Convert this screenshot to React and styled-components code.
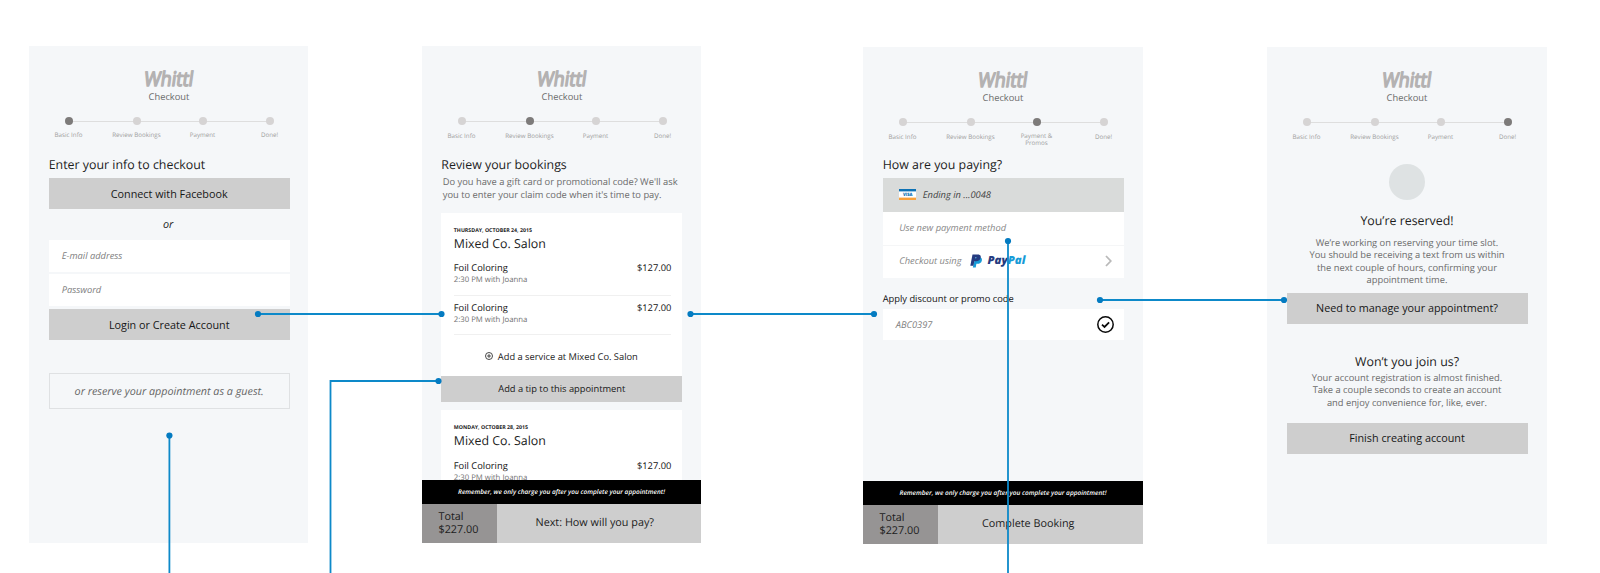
import React from "react";
import styled, { createGlobalStyle } from "styled-components";

const GlobalStyle = createGlobalStyle`
  * { box-sizing: border-box; }
  body {
    margin: 0;
    background: #fff;
    color: #1c1c1c;
    font-family: "Open Sans", "Noto Sans", sans-serif;
    font-size: 9.32px;
    text-rendering: geometricPrecision;
    overflow: hidden;
  }
`;

const Board = styled.main`
  position: relative;
  display: flex;
  align-items: flex-start;
  width: 1600px;
  height: 573px;
  padding: 46px 0 0 29px;
`;

const Screen = styled.section`
  display: flex;
  flex-direction: column;
  flex: none;
  width: ${(p) => p.$width || 279}px;
  height: 497px;
  margin: ${(p) => p.$top || 0}px ${(p) => p.$gap || 0}px 0 0;
  background: #f5f7f9;
  overflow: hidden;
`;

/* ---------- header ---------- */

const Header = styled.header`
  flex: none;
  width: 279px;
  height: ${(p) => p.$height || 110}px;
  padding-top: 23px;
`;

const Logo = styled.svg`
  display: block;
  width: 56px;
  height: 20px;
  margin: 0 auto;
  overflow: visible;

  text {
    font: 400 20px "Open Sans", sans-serif;
    fill: #b4b2b2;
    stroke: #b4b2b2;
    stroke-width: 1.5;
    stroke-linejoin: round;
  }
`;

const Subtitle = styled.div`
  padding-left: 1px;
  line-height: 16px;
  text-align: center;
  color: #6a6a6a;
`;

const Stepper = styled.ol`
  display: grid;
  grid-template-columns: 67px 69px 63px 71px;
  margin: 12px 0 0;
  padding: 0 0 0 6px;
  list-style: none;
  background: linear-gradient(#dedede, #dedede) 39px 3.5px / 201px 1px no-repeat;
`;

const StepItem = styled.li`
  display: flex;
  flex-direction: column;
  align-items: center;
  gap: ${(p) => p.$gap}px;
  color: #a0a0a0;
  font-size: 6.22px;
  line-height: 7px;
  text-align: center;
  white-space: pre-line;

  &::before {
    content: "";
    width: 8px;
    height: 8px;
    border-radius: 50%;
    background: ${(p) => (p.$active ? "#7d7b7a" : "#d6d4d4")};
  }
`;

/* ---------- shared parts ---------- */

const Content = styled.div`
  display: flex;
  flex-direction: column;
  flex: 1;
  width: 279px;
  min-height: 0;
  padding: 0 18px 0 20px;
  margin-left: ${(p) => p.$shift || 0}px;
  overflow: hidden;
`;

const Title = styled.h2`
  flex: none;
  margin: ${(p) => p.$top || 0}px 0 0;
  font-size: 12.38px;
  font-weight: 400;
  line-height: 18px;
  text-align: ${(p) => p.$align || "left"};
`;

const Button = styled.button`
  flex: none;
  height: ${(p) => p.$height || 31}px;
  margin: ${(p) => p.$top || 0}px 0 0;
  padding: 0 0 ${(p) => p.$lift || 0}px;
  border: 0;
  background: #cecece;
  color: #161616;
  font-family: inherit;
  font-size: ${(p) => (p.$small ? 9.32 : 10.8)}px;
`;

const Or = styled.div`
  height: 31px;
  padding-right: 2px;
  line-height: 31px;
  font-size: 10.8px;
  font-style: italic;
  text-align: center;
`;

const Field = styled.div`
  display: flex;
  align-items: center;
  justify-content: space-between;
  height: 31.5px;
  margin-bottom: ${(p) => p.$gap || 0}px;
  padding: 0 9.5px 0 13px;
  background: #fff;
  color: #808080;
  font-style: italic;
`;

const GuestBox = styled.div`
  width: 241px;
  height: 36px;
  margin: 33px 0 0;
  border: 1px solid #dfe1e3;
  color: #666;
  font-size: 10.78px;
  font-style: italic;
  line-height: 35px;
  text-align: center;
`;

const Copy = styled.p`
  flex: none;
  margin: ${(p) => p.$top || 0}px 0 0;
  padding-left: ${(p) => p.$indent || 0}px;
  color: #6a6a6a;
  line-height: ${(p) => p.$line || 12.3}px;
  text-align: ${(p) => p.$align || "center"};
  white-space: pre;
`;

/* ---------- bookings ---------- */

const Card = styled.article`
  flex: none;
  height: ${(p) => p.$height}px;
  margin-top: ${(p) => p.$top}px;
  padding: 14px 11px 0 12.5px;
  background: #fff;
`;

const CardDate = styled.div`
  font-size: 5.28px;
  font-weight: 700;
  line-height: 7px;
`;

const Salon = styled.h3`
  margin: 0.6px 0 8.7px;
  font-size: 12.38px;
  font-weight: 400;
  line-height: 18px;
`;

const Service = styled.div`
  display: grid;
  grid-template-columns: 1fr auto;
  align-content: start;
  height: ${(p) => p.$height || 40}px;
  margin-bottom: ${(p) => p.$after || 0}px;
  border-bottom: 1px solid #f0f0f0;
  color: #111;
  line-height: 13px;
`;

const ServiceTime = styled.span`
  grid-column: 1 / -1;
  color: #707070;
  font-size: 7.77px;
  line-height: 13px;
`;

const AddService = styled.div`
  display: flex;
  align-items: center;
  justify-content: center;
  gap: 4.5px;
  height: 43px;
  padding-right: 2px;
`;

/* ---------- footer ---------- */

const Footer = styled.footer`
  flex: none;
`;

const Notice = styled.div`
  height: 24px;
  background: #000;
  color: #fff;
  font-size: 6.49px;
  font-style: italic;
  font-weight: 600;
  line-height: 24px;
  text-align: center;
`;

const Bar = styled.div`
  display: flex;
  height: 39.3px;
  background: #cecece;
`;

const Total = styled.div`
  width: 75px;
  padding: 6px 0 0 16.5px;
  background: #969494;
  font-size: 10.8px;
  line-height: 13.2px;
`;

const BarAction = styled.div`
  flex: 1;
  padding-left: ${(p) => p.$indent}px;
  font-size: 10.82px;
  line-height: 38px;
`;

/* ---------- payment ---------- */

const SavedCard = styled.div`
  display: flex;
  align-items: center;
  gap: 6.5px;
  height: 34.5px;
  margin-top: 3.5px;
  padding-left: 16.5px;
  background: #d9dbda;
  color: #444;
  font-style: italic;
`;

const Method = styled.div`
  display: flex;
  align-items: center;
  height: ${(p) => p.$height}px;
  padding: 0 12px 2px 16.5px;
  border-bottom: ${(p) => (p.$last ? 0 : 1)}px solid #f5f6f7;
  background: #fff;
  color: #888;
  font-style: italic;
`;

const PayPal = styled.span`
  display: flex;
  align-items: center;
  margin: 0 auto 0 9px;
  color: #253b80;
  font-size: 11.4px;
  font-weight: 800;
  line-height: 14px;

  svg {
    margin-right: 4px;
  }
  b {
    color: #179bd7;
    font-weight: 800;
  }
`;

const FieldLabel = styled.div`
  height: 30.5px;
  padding-top: 13.5px;
  color: #111;
  line-height: 13px;
`;

const Avatar = styled.div`
  flex: none;
  width: 36.5px;
  height: 36.5px;
  margin: 7.5px auto 11.5px;
  border-radius: 50%;
  background: #dee2e3;
`;

const Connectors = styled.svg`
  position: absolute;
  inset: 0;
  pointer-events: none;

  path {
    fill: none;
    stroke: #0d89c9;
    stroke-width: 1.8;
  }
  circle {
    fill: #047bc1;
  }
`;

const STEPS = ["Basic Info", "Review Bookings", "Payment", "Done!"];

function CheckoutHeader({ active, steps = STEPS, height, gap }) {
  return (
    <Header $height={height}>
      <Logo viewBox="0 0 56 20" role="img" aria-label="Whittl">
        <text x="5" y="17" textLength="49" lengthAdjust="spacingAndGlyphs" transform="skewX(-8)">
          Whittl
        </text>
      </Logo>
      <Subtitle>Checkout</Subtitle>
      <Stepper>
        {steps.map((label, i) => (
          <StepItem key={label} $active={i === active} $gap={label.includes("\n") ? gap - 1 : gap}>
            {label}
          </StepItem>
        ))}
      </Stepper>
    </Header>
  );
}

function ServiceRow({ height, after }) {
  return (
    <Service $height={height} $after={after}>
      <span>Foil Coloring</span>
      <span>$127.00</span>
      <ServiceTime>2:30 PM with Joanna</ServiceTime>
    </Service>
  );
}

function CheckoutFooter({ action, indent }) {
  return (
    <Footer>
      <Notice>Remember, we only charge you after you complete your appointment!</Notice>
      <Bar>
        <Total>
          Total
          <br />
          $227.00
        </Total>
        <BarAction $indent={indent}>{action}</BarAction>
      </Bar>
    </Footer>
  );
}

const PlusIcon = () => (
  <svg width="8" height="8" viewBox="0 0 8 8" fill="none" stroke="#333" strokeWidth="0.9">
    <circle cx="4" cy="4" r="3.5" />
    <path d="M4 2.1v3.8M2.1 4h3.8" />
  </svg>
);

const VisaIcon = () => (
  <svg width="17" height="11" viewBox="0 0 17 11">
    <rect width="17" height="11" fill="#fff" />
    <rect width="17" height="2.4" fill="#0d72b5" />
    <rect y="8.6" width="17" height="2.4" fill="#f9a13a" />
    <text x="4" y="7.3" fontSize="4.6" fontWeight="800" fontStyle="normal" fill="#0d72b5" textLength="9.5" lengthAdjust="spacingAndGlyphs">
      VISA
    </text>
  </svg>
);

const PayPalMark = () => (
  <svg width="13" height="14" viewBox="0 0 12 14" preserveAspectRatio="none">
    <path fill="#179bd7" d="M5 3.2h4.6c1.4.8 1.7 2 1.3 3.5-.5 2.2-2 3.1-4.2 3.1h-.8L5.300 13.5H2.6z" />
    <path fill="#253b80" fillRule="evenodd" d="M2.3.5h4.9c2 0 3.1 1.1 2.7 3.100-.4 2.5-2 3.7-4.4 3.7H4L3.200 11.800H.3zM4.900 3.200l-.2 1.300h.5c.6 0 .9-.2 1-.7.100-.4-.2-.6-.6-.6z" />
  </svg>
);

const CheckIcon = () => (
  <svg width="17" height="17" viewBox="0 0 17 17" fill="none" stroke="#0a0a0a" strokeWidth="1.5">
    <circle cx="8.5" cy="8.5" r="7.7" />
    <path d="M5 8.7l2.5 2.3 4.6-4.6" strokeWidth="1.8" />
  </svg>
);

const ChevronIcon = () => (
  <svg width="7" height="12" viewBox="0 0 7 12" fill="none" stroke="#b9b9b9" strokeWidth="1.8">
    <path d="M1 1l4.8 5L1 11" />
  </svg>
);

const LINKS = [
  { d: "M258 314H441.5", dots: [[258, 314], [441.5, 314]] },
  { d: "M690.5 314H874", dots: [[690.5, 314], [874, 314]] },
  { d: "M169.4 435.5V573", dots: [[169.4, 435.5]] },
  { d: "M330.5 573V381H438.5", dots: [[438.5, 381]] },
  { d: "M1008 241V573", dots: [[1008, 241]] },
  { d: "M1100 300H1284", dots: [[1100, 300], [1284, 300]] },
];

export default function App() {
  return (
    <>
      <GlobalStyle />
      <Board>
        <Screen $gap={114}>
          <CheckoutHeader active={0} gap={6} />
          <Content $shift={-0.3}>
            <Title>Enter your info to checkout</Title>
            <Button $top={4}>Connect with Facebook</Button>
            <Or>or</Or>
            <Field $gap={2.5}>E-mail address</Field>
            <Field $gap={3}>Password</Field>
            <Button>Login or Create Account</Button>
            <GuestBox>or reserve your appointment as a guest.</GuestBox>
          </Content>
        </Screen>

        <Screen $gap={162}>
          <CheckoutHeader active={1} gap={7} />
          <Content $shift={-0.7}>
            <Title>Review your bookings</Title>
            <Copy $align="left" $line={13.3} $top={1} $indent={1.5}>
              {"Do you have a gift card or promotional code? We'll ask\nyou to enter your claim code when it's time to pay."}
            </Copy>
            <Card $height={163.5} $top={11.4}>
              <CardDate>THURSDAY, OCTOBER 24, 2015</CardDate>
              <Salon>Mixed Co. Salon</Salon>
              <ServiceRow height={35} after={4.5} />
              <ServiceRow height={34} />
              <AddService>
                <PlusIcon />
                Add a service at Mixed Co. Salon
              </AddService>
            </Card>
            <Button $small $height={25.5} $lift={2}>Add a tip to this appointment</Button>
            <Card $height={110} $top={8.3}>
              <CardDate>MONDAY, OCTOBER 28, 2015</CardDate>
              <Salon>Mixed Co. Salon</Salon>
              <ServiceRow />
            </Card>
          </Content>
          <CheckoutFooter action="Next: How will you pay?" indent={38.5} />
        </Screen>

        <Screen $top={1} $width={280} $gap={124}>
          <CheckoutHeader
            active={2}
            height={109}
            gap={6.5}
            steps={["Basic Info", "Review Bookings", "Payment &\nPromos", "Done!"]}
          />
          <Content $shift={-0.3}>
            <Title>How are you paying?</Title>
            <SavedCard>
              <VisaIcon />
              Ending in ...0048
            </SavedCard>
            <Method $height={33.5}>Use new payment method</Method>
            <Method $height={32.5} $last>
              Checkout using
              <PayPal>
                <PayPalMark />
                Pay<b>Pal</b>
              </PayPal>
              <ChevronIcon />
            </Method>
            <FieldLabel>Apply discount or promo code</FieldLabel>
            <Field>
              ABC0397
              <CheckIcon />
            </Field>
          </Content>
          <CheckoutFooter action="Complete Booking" indent={44} />
        </Screen>

        <Screen $top={1} $width={280}>
          <CheckoutHeader active={3} height={109} gap={6.5} />
          <Content $shift={-0.5}>
            <Avatar />
            <Title $align="center">You’re reserved!</Title>
            <Copy $top={7.5}>
              {"We’re working on reserving your time slot.\nYou should be receiving a text from us within\nthe next couple of hours, confirming your\nappointment time."}
            </Copy>
            <Button $top={6.5} $lift={2}>Need to manage your appointment?</Button>
            <Title $align="center" $top={29}>Won’t you join us?</Title>
            <Copy $top={1.5}>
              {"Your account registration is almost finished.\nTake a couple seconds to create an account\nand enjoy convenience for, like, ever."}
            </Copy>
            <Button $top={13.5} $lift={2}>Finish creating account</Button>
          </Content>
        </Screen>

        <Connectors width="1600" height="573" viewBox="0 0 1600 573">
          {LINKS.map(({ d, dots }) => (
            <g key={d}>
              <path d={d} />
              {dots.map(([cx, cy]) => (
                <circle key={cx} cx={cx} cy={cy} r="3.1" />
              ))}
            </g>
          ))}
        </Connectors>
      </Board>
    </>
  );
}
